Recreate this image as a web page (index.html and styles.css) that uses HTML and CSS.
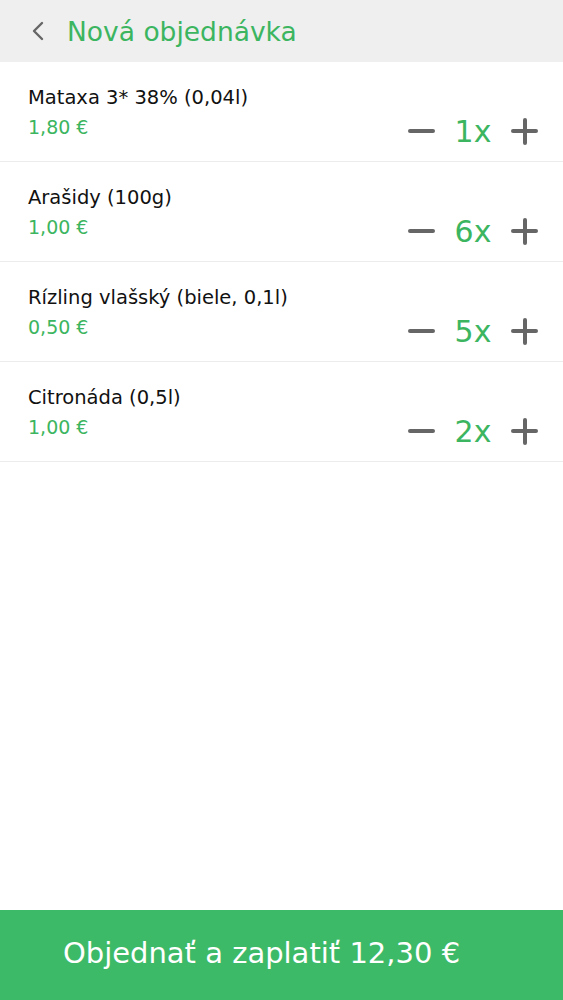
FILE: index.html
```html
<!DOCTYPE html>
<html lang="sk">
<head>
<meta charset="utf-8">
<title>Nová objednávka</title>
<link rel="stylesheet" href="styles.css">
</head>
<body>
<div class="app">
  <header class="topbar">
    <svg class="back" width="14" height="20" viewBox="0 0 14 20"><path d="M11 2 L3 10 L11 18" fill="none" stroke="#666" stroke-width="2.4" stroke-linecap="round" stroke-linejoin="round"/></svg>
    <h1 class="title">Nová objednávka</h1>
  </header>
  <main class="list">
    <div class="row">
      <div class="info"><div class="name">Mataxa 3* 38% (0,04l)</div><div class="price">1,80 €</div></div>
      <div class="qty"><span class="minus"></span><span class="count">1x</span><span class="plus"></span></div>
    </div>
    <div class="row">
      <div class="info"><div class="name">Arašidy (100g)</div><div class="price">1,00 €</div></div>
      <div class="qty"><span class="minus"></span><span class="count">6x</span><span class="plus"></span></div>
    </div>
    <div class="row">
      <div class="info"><div class="name">Rízling vlašský (biele, 0,1l)</div><div class="price">0,50 €</div></div>
      <div class="qty"><span class="minus"></span><span class="count">5x</span><span class="plus"></span></div>
    </div>
    <div class="row">
      <div class="info"><div class="name">Citronáda (0,5l)</div><div class="price">1,00 €</div></div>
      <div class="qty"><span class="minus"></span><span class="count">2x</span><span class="plus"></span></div>
    </div>
  </main>
  <button class="order">Objednať a zaplatiť 12,30 €</button>
</div>
</body>
</html>
```
FILE: styles.css
```css
* { box-sizing: border-box; }
html, body { margin: 0; padding: 0; }
body { font-family: "DejaVu Sans", "Liberation Sans", sans-serif; background: #fff; }
.app { display: flex; flex-direction: column; min-height: 100vh; }
.topbar { height: 62px; background: #efefef; display: flex; align-items: center; padding-left: 31px; gap: 22px; }
.back { display: block; }
.title { margin: 0; font-weight: normal; font-size: 26.5px; color: #3cb560; letter-spacing: 0; }
.list { flex: 1; }
.row { height: 100px; border-bottom: 1.5px solid #ececec; display: flex; justify-content: space-between; padding: 22px 25px 0 28px; }
.name { font-size: 19.5px; color: #111; line-height: 28px; }
.price { font-size: 19px; color: #3cb560; line-height: 30px; }
.qty { display: flex; align-items: center; height: 40px; margin-top: 27px; }
.minus, .plus { position: relative; width: 27px; height: 27px; display: block; }
.minus::before, .plus::before, .plus::after { content: ""; position: absolute; background: #666; border-radius: 2px; }
.minus::before, .plus::before { left: 0; right: 0; top: 11.5px; height: 4px; }
.plus::after { top: 0; bottom: 0; left: 11.5px; width: 4px; }
.count { font-size: 30px; color: #3cb560; width: 76px; text-align: center; }
.order { height: 90px; border: 0; background: #3dba68; color: #fff; font-family: inherit; font-size: 29px; width: 100%; padding: 0 40px 4px 0; }
```
